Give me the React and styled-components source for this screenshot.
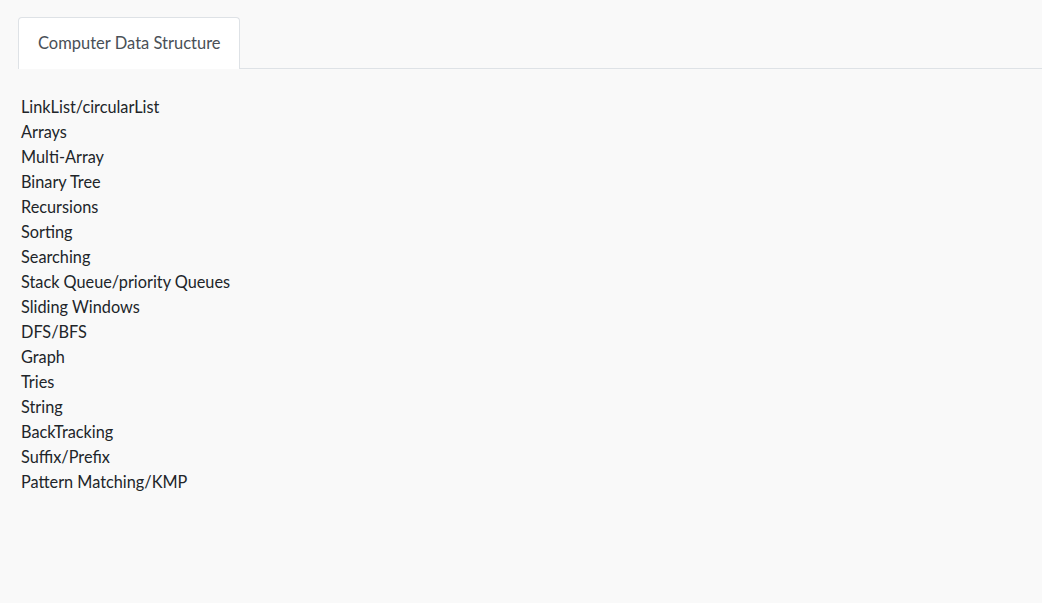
import React from "react";
import styled, { createGlobalStyle } from "styled-components";

const Global = createGlobalStyle`
  html, body { margin: 0; padding: 0; background: #f9f9f9; }
  body { font-family: "Lato", "Noto Sans", sans-serif; }
`;

const Page = styled.div`
  padding: 17px 0 0 18px;
`;

const Tabs = styled.div`
  display: flex;
  border-bottom: 1px solid #dee2e6;
`;

const Tab = styled.div`
  box-sizing: border-box;
  height: 52px;
  padding: 0 18px 2px 19px;
  display: flex;
  align-items: center;
  background: #fff;
  border: 1px solid #dee2e6;
  border-bottom: none;
  border-radius: 4px 4px 0 0;
  margin-bottom: -1px;
  font-size: 16.5px;
  color: #495057;
`;

const List = styled.ul`
  list-style: none;
  margin: 25px 0 0 3px;
  padding: 0;
`;

const Item = styled.li`
  font-size: 16.3px;
  line-height: 25px;
  color: #212529;
`;

const items = [
  "LinkList/circularList",
  "Arrays",
  "Multi-Array",
  "Binary Tree",
  "Recursions",
  "Sorting",
  "Searching",
  "Stack Queue/priority Queues",
  "Sliding Windows",
  "DFS/BFS",
  "Graph",
  "Tries",
  "String",
  "BackTracking",
  "Suffix/Prefix",
  "Pattern Matching/KMP",
];

export default function App() {
  return (
    <>
      <Global />
      <Page>
        <Tabs>
          <Tab>Computer Data Structure</Tab>
        </Tabs>
        <List>
          {items.map((t) => (
            <Item key={t}>{t}</Item>
          ))}
        </List>
      </Page>
    </>
  );
}
